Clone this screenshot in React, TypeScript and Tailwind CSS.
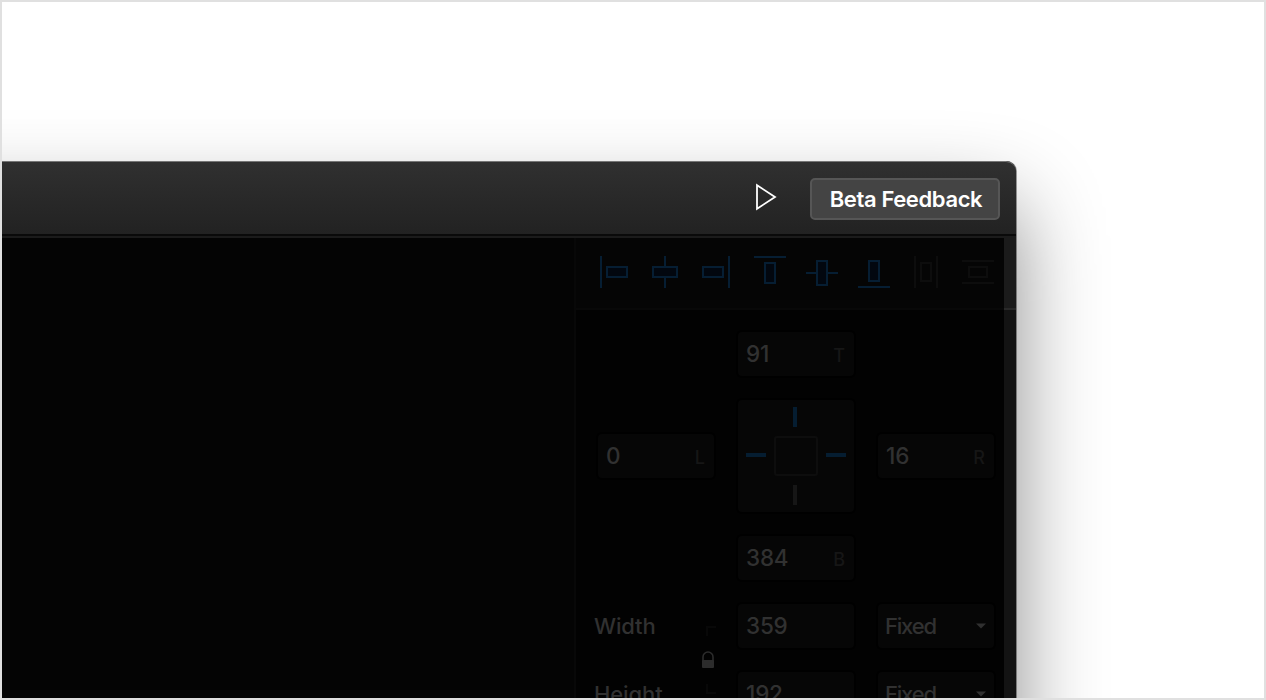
import type { ReactNode } from "react";

const icons: { tone: string; fill: string; line: string; rect: [number, number, number, number] }[] = [
  { tone: "#061e33", fill: "#02070f", line: "M3 0V32", rect: [9, 11, 20, 10] },
  { tone: "#061e33", fill: "#02070f", line: "M15 0V32", rect: [3, 11, 24, 10] },
  { tone: "#061e33", fill: "#02070f", line: "M27 0V32", rect: [1, 11, 20, 10] },
  { tone: "#061e33", fill: "#02070f", line: "M0 1H32", rect: [11, 7, 10, 20] },
  { tone: "#061e33", fill: "#02070f", line: "M0 17H32", rect: [11, 5, 10, 24] },
  { tone: "#061e33", fill: "#02070f", line: "M0 31H32", rect: [11, 5, 10, 20] },
  { tone: "#0d0d0d", fill: "#050505", line: "M5 0V32M27 0V32", rect: [11, 7, 10, 18] },
  { tone: "#0d0d0d", fill: "#050505", line: "M0 5H32M0 27H32", rect: [7, 11, 18, 10] },
];

function AlignBar() {
  return (
    <div className="flex h-[72px] shrink-0 gap-5 border-b-2 border-[#080808] bg-[#050505] pt-[18px] pl-[22px]">
      {icons.map(({ tone, fill, line, rect: [x, y, w, h] }) => (
        <svg key={line} width="32" height="32" className="shrink-0" fill={fill} stroke={tone} strokeWidth="2" shapeRendering="crispEdges">
          <path d={line} />
          <rect x={x} y={y} width={w} height={h} />
        </svg>
      ))}
    </div>
  );
}

function Field({ value, hint, children, className = "" }: { value: string; hint?: string; children?: ReactNode; className?: string }) {
  return (
    <div className={`flex h-12 items-center justify-between rounded-md border-2 border-black bg-[#060606] pr-[9px] pl-2 ${className}`}>
      <span className="text-[22.5px] leading-none font-medium tracking-[-0.2px]">{value}</span>
      {hint && <span className="pt-[3px] text-[18px] leading-none font-medium text-[#161616]">{hint}</span>}
      {children}
    </div>
  );
}

function Select({ className = "" }: { className?: string }) {
  return (
    <div className={`flex h-12 items-center justify-between rounded-md border-2 border-black bg-[#060606] pr-2 pl-[7px] ${className}`}>
      <span className="text-[22px] leading-none font-medium tracking-[-1.2px]">Fixed</span>
      <svg width="10" height="6" fill="#303030">
        <path d="M0 .5H10L5 5.5Z" />
      </svg>
    </div>
  );
}

function PinBox() {
  return (
    <div className="col-start-2 rounded-md border-2 border-black bg-[#060606]">
      <svg width="116" height="112" fill="none">
        <path d="M57 7V27M8 55H28M88 55H108" stroke="#051d31" strokeWidth="4" />
        <path d="M57 85V105" stroke="#161616" strokeWidth="4" />
        <rect x="37" y="37" width="42" height="38" rx="2" stroke="#0d0d0d" strokeWidth="2" />
      </svg>
    </div>
  );
}

function Inspector() {
  return (
    <aside className="flex w-[430px] shrink-0 flex-col border-l-2 border-[#080808] bg-[#020202] text-[#313131]">
      <AlignBar />
      <div className="grid grid-cols-[120px_120px_120px] gap-5 pt-5 pl-5">
        <Field className="col-start-2" value="91" hint="T" />
        <Field className="col-start-1 row-start-2 self-center" value="0" hint="L" />
        <PinBox />
        <Field className="self-center" value="16" hint="R" />
        <Field className="col-start-2" value="384" hint="B" />
        <span className="col-start-1 row-start-4 -ml-0.5 self-center text-[22px] leading-none font-medium tracking-[-0.15px]">Width</span>
        <Field className="col-start-2 row-start-4" value="359" />
        <Select className="col-start-3 row-start-4" />
        <span className="col-start-1 row-start-5 -ml-0.5 self-center text-[22px] leading-none font-medium tracking-[-0.1px]">Height</span>
        <Field className="col-start-2 row-start-5" value="192" />
        <Select className="col-start-3 row-start-5" />
        <svg className="col-start-1 row-span-2 row-start-4 self-center justify-self-end" width="14" height="68" fill="none">
          <path d="M14 1H5V10M5 58V67H14" stroke="#080808" strokeWidth="2" />
          <path d="M1 35V31A5 5 0 0 1 11 31V35" stroke="#2c2c2c" strokeWidth="1.600" />
          <rect y="34" width="12" height="8" rx="1" fill="#2c2c2c" />
        </svg>
      </div>
    </aside>
  );
}

export default function App() {
  return (
    <div className="h-[700px] w-[1266px] overflow-hidden border-2 border-[#e0e0e0] bg-white pt-[159px] font-['Inter',sans-serif]">
      <div className="-ml-[200px] flex h-[840px] w-[1214px] flex-col rounded-t-[10px] bg-[#040404] shadow-[1px_0_0_0_#00000060,0_44px_86px_rgba(0,0,0,0.46)]">
        <header className="flex h-[73px] shrink-0 items-center justify-end rounded-t-[10px] border-t border-[#767676] bg-linear-to-b from-[#303030] to-[#222222] pr-4">
          <svg width="22" height="28" viewBox="0 0 22 28" className="mr-[33px] mb-[3px]" fill="none" stroke="#fff" strokeWidth="1.800">
            <path d="M2 2.200V25.800L20 14Z" />
          </svg>
          <button className="mt-0.5 flex h-[42px] w-[190px] items-center justify-center rounded-[5px] border-2 border-[#565656] bg-[#444444] pl-0.5 text-[22px] font-semibold tracking-[-0.38px] text-white">
            Beta Feedback
          </button>
        </header>
        <div className="h-0.5 shrink-0 bg-[#0a0a0a]" />
        <div className="h-0.5 shrink-0 bg-[#1b1b1b]" />
        <div className="flex min-h-0 flex-1">
          <main className="flex-1 bg-[#040404]" />
          <Inspector />
          <div className="flex w-3 shrink-0 flex-col bg-[#131313]">
            <div className="h-[72px] border-b-2 border-[#292929] bg-[#1b1b1b]" />
          </div>
        </div>
      </div>
    </div>
  );
}
